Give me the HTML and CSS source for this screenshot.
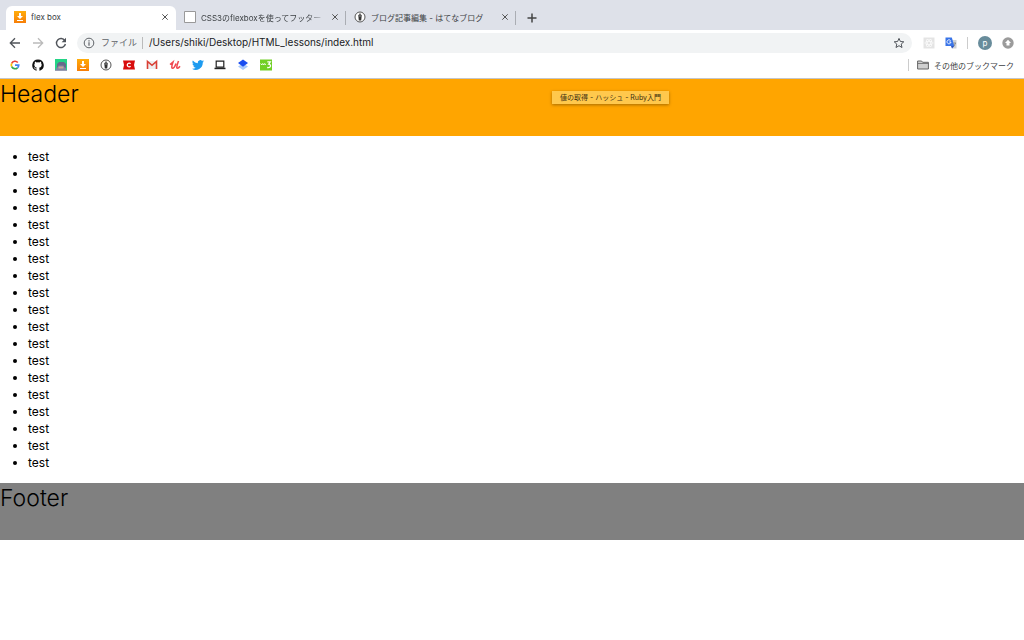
FILE: index.html
```html
<!DOCTYPE html>
<html lang="ja">
  <head>
    <meta charset="UTF-8" />
    <meta name="viewport" content="width=device-width, initial-scale=1.0" />
    <title>flex box</title>
    <link rel="stylesheet" href="styles.css" />
  </head>
  <body>
    <!-- shared icons -->
    <svg class="defs" aria-hidden="true">
      <defs>
        <linearGradient id="orange" x1="0" y1="0" x2="0" y2="1">
          <stop offset="0" stop-color="#ffad0a" />
          <stop offset="1" stop-color="#f77e08" />
        </linearGradient>
        <symbol id="download" viewBox="0 0 12 12">
          <rect width="12" height="12" fill="url(#orange)" />
          <path d="M5 2h2v3h2L6 8 3 5h2zM3 9h6v1H3z" fill="#fff" />
        </symbol>
        <symbol id="hatena" viewBox="0 0 12 12">
          <circle cx="6" cy="6" r="5" fill="#fff" stroke="#555" />
          <path d="M6 2L4.3 4.5 4.8 9.600h2.400l.5-5.100z" fill="#333" />
          <path d="M6 2v4" stroke="#ccc" stroke-width=".6" />
        </symbol>
        <symbol id="close" viewBox="0 0 8 8">
          <path d="M1.3 1.3l5.4 5.4M6.7 1.3L1.3 6.700" stroke="#555" stroke-width="1" />
        </symbol>
      </defs>
    </svg>

    <div class="browser">
      <div class="tabs">
        <div class="tab active">
          <svg class="icon"><use href="#download" /></svg>
          <span class="tab-title">flex box</span>
          <button class="close" aria-label="閉じる"><svg><use href="#close" /></svg></button>
        </div>
        <div class="tab">
          <svg class="icon" viewBox="0 0 12 12"><path d="M.5.5h11v11H.5z" fill="#fff" stroke="#999" /></svg>
          <span class="tab-title fade">CSS3のflexboxを使ってフッター</span>
          <button class="close" aria-label="閉じる"><svg><use href="#close" /></svg></button>
        </div>
        <div class="tab">
          <svg class="icon"><use href="#hatena" /></svg>
          <span class="tab-title">ブログ記事編集 - はてなブログ</span>
          <button class="close" aria-label="閉じる"><svg><use href="#close" /></svg></button>
        </div>
        <button class="new-tab" aria-label="新しいタブ">
          <svg viewBox="0 0 10 10"><path d="M5 .5v9M.5 5h9" stroke="#444" stroke-width="1.5" /></svg>
        </button>
      </div>

      <div class="toolbar">
        <div class="nav">
          <button aria-label="戻る">
            <svg class="icon" viewBox="0 0 12 12"><path d="M11 6H1.5M6 1.3L1.3 6 6 10.7" fill="none" stroke="#50545a" stroke-width="1.3" /></svg>
          </button>
          <button aria-label="進む">
            <svg class="icon" viewBox="0 0 12 12"><path d="M1 6h9.5M6 1.3L10.7 6 6 10.7" fill="none" stroke="#bbb" stroke-width="1.3" /></svg>
          </button>
          <button aria-label="再読み込み">
            <svg class="icon" viewBox="0 0 12 12"><path d="M9.8 3.6A4.5 4.5 0 1 0 10.4 7" fill="none" stroke="#50545a" stroke-width="1.4" /><path d="M11 .8v4.4H6.6z" fill="#50545a" /></svg>
          </button>
        </div>
        <div class="address">
          <svg class="icon" viewBox="0 0 12 12"><circle cx="6" cy="6" r="4.8" fill="none" stroke="#5f6368" /><path d="M6 5.2v3.5M6 3.2v1.2" stroke="#5f6368" stroke-width="1.2" /></svg>
          <label for="url">ファイル</label>
          <input type="text" id="url" value="/Users/shiki/Desktop/HTML_lessons/index.html" />
          <button aria-label="ブックマークに追加">
            <svg class="icon" viewBox="0 0 12 12"><path d="M6 1.4l1.4 3.1 3.4.3-2.6 2.3.8 3.4-3-1.8-3 1.8.8-3.4L1.2 4.8l3.4-.3z" fill="none" stroke="#50545a" /></svg>
          </button>
        </div>
        <div class="extensions">
          <button aria-label="React">
            <svg class="icon" viewBox="0 0 12 12"><path d="M.5.5h11v11H.5z" fill="#e4e4e4" /><g fill="none" stroke="#fff" stroke-width=".6"><ellipse cx="6" cy="6" rx="4.2" ry="1.7" /><ellipse cx="6" cy="6" rx="4.2" ry="1.7" transform="rotate(60 6 6)" /><ellipse cx="6" cy="6" rx="4.2" ry="1.7" transform="rotate(120 6 6)" /></g></svg>
          </button>
          <button aria-label="翻訳">
            <svg class="icon" viewBox="0 0 12 12"><path d="M5 3h6.5v8.500H7z" fill="#cfd2d6" /><path d="M.5.5h6.300l2.500 8.500H.5z" fill="#3974e8" /><path d="M6 9h3.300L7 11.500z" fill="#2a50b8" /><path d="M5.6 3.6A2 2 0 1 0 6 5H4.200" fill="none" stroke="#fff" stroke-width=".9" /><path d="M8.500 6h2.500M10.600 6L9 9" stroke="#777" stroke-width=".7" /></svg>
          </button>
          <span class="divider"></span>
          <button class="avatar" aria-label="プロフィール">p</button>
          <button aria-label="更新">
            <svg class="icon" viewBox="0 0 12 12"><circle cx="6" cy="6" r="5.700" fill="#9b9b9b" /><path d="M6 2.800L9 6 7.500 6v2.500h-3V6H3z" fill="#fff" /></svg>
          </button>
        </div>
      </div>

      <div class="bookmarks">
        <nav class="bookmark-icons">
          <a href="#" aria-label="Google">
            <svg class="icon" viewBox="0 0 12 12"><g fill="none" stroke-width="1.7"><path d="M8.8 3.5A3.7 3.7 0 0 0 2.7 4.3" stroke="#ea4335" /><path d="M2.7 4.3a3.7 3.7 0 0 0 0 3.4" stroke="#fbbc05" /><path d="M2.7 7.7a3.7 3.7 0 0 0 5.8 1.1" stroke="#34a853" /><path d="M8.5 8.8A3.7 3.7 0 0 0 9.7 6.2H6" stroke="#4285f4" /></g></svg>
          </a>
          <a href="#" aria-label="GitHub">
            <svg class="icon" viewBox="0 0 16 16"><path d="M8 .5a7.7 7.7 0 0 0-2.4 15c.4.1.5-.2.5-.4v-1.5c-2.1.5-2.600-.9-2.600-.9-.3-.9-.8-1.100-.8-1.100-.7-.5 0-.5 0-.5.8.1 1.200.8 1.200.8.7 1.200 1.800.9 2.200.7.1-.5.3-.9.5-1.100-1.700-.2-3.500-.9-3.500-3.800 0-.8.3-1.500.8-2-.1-.2-.4-1 .1-2 0 0 .6-.2 2.100.8a7.500 7.500 0 0 1 3.800 0c1.500-1 2.100-.8 2.100-.8.4 1 .2 1.800.1 2 .5.5.8 1.200.8 2 0 2.900-1.800 3.600-3.500 3.800.3.2.5.7.5 1.400v2.200c0 .2.1.5.5.4A7.700 7.700 0 0 0 8 .5z" fill="#111" /></svg>
          </a>
          <a href="#" aria-label="キャラクター">
            <svg class="icon" viewBox="0 0 12 12"><path d="M0 0h12v12H0z" fill="#24d486" /><path d="M2 9V5l2-2h5l2 2v4z" fill="#666b8a" /><path d="M1 9l2-1 .5-1.500h5L9 8l2 1v2H1z" fill="#8085a3" /><path d="M3.500 7.500h5v2h-5z" fill="#c9a698" /><path d="M0 11h12v1H0z" fill="#999db3" /></svg>
          </a>
          <a href="#" aria-label="ダウンロード"><svg class="icon"><use href="#download" /></svg></a>
          <a href="#" aria-label="はてなブログ"><svg class="icon"><use href="#hatena" /></svg></a>
          <a href="#" aria-label="チケット">
            <svg class="icon" viewBox="0 0 12 12"><path d="M0 1.500h12L11 6l1 4.500H0L1 6z" fill="#d80c0c" /><path d="M7.600 4.700a1.900 1.900 0 1 0 0 2.600" fill="none" stroke="#fff" stroke-width="1.300" /></svg>
          </a>
          <a href="#" aria-label="Gmail">
            <svg class="icon" viewBox="0 0 12 12"><path d="M1 2h10v8H1z" fill="#eee" /><path d="M1.500 10V2.500L6 6.300l4.500-3.800V10" fill="none" stroke="#d93f35" stroke-width="1.600" /></svg>
          </a>
          <a href="#" aria-label="Udemy">
            <svg class="icon" viewBox="0 0 12 12"><path d="M1 5.500L4 3C3.200 5.500 2 9.300 3.500 9.300S6.500 6 7 4.500M9.500 2C8.500 5 6.800 9.300 8.500 9.300c1 0 1.800-1 2.500-2" fill="none" stroke="#f04850" stroke-width="1.500" /></svg>
          </a>
          <a href="#" aria-label="Twitter">
            <svg class="icon" viewBox="0 0 24 24"><path d="M24 4.600a10 10 0 0 1-2.800.8 5 5 0 0 0 2.100-2.700 10 10 0 0 1-3.100 1.200 4.900 4.900 0 0 0-8.400 4.500A14 14 0 0 1 1.700 3.100a4.900 4.900 0 0 0 1.500 6.600 5 5 0 0 1-2.200-.6 4.900 4.900 0 0 0 3.900 4.900 5 5 0 0 1-2.200.1 4.900 4.900 0 0 0 4.600 3.400A10 10 0 0 1 0 19.500a14 14 0 0 0 21.500-12.400A10 10 0 0 0 24 4.600z" fill="#1d9bf0" /></svg>
          </a>
          <a href="#" aria-label="パソコン">
            <svg class="icon" viewBox="0 0 12 12"><path d="M2.200 2.200h7.600v6H2.200z" fill="none" stroke="#222" stroke-width="1.200" /><path d="M.5 8.700h11v1.500H.5z" fill="#222" /></svg>
          </a>
          <a href="#" aria-label="レイヤー">
            <svg class="icon" viewBox="0 0 12 12"><path d="M1 7.500L6 4.500l5 3-5 3.500z" fill="#a9c9fa" /><path d="M1 4l5-3.500L11 4 6 7.800z" fill="#1a4df0" /></svg>
          </a>
          <a href="#" aria-label="w3">
            <svg class="icon" viewBox="0 0 12 12"><path d="M0 .5h12v11H0z" fill="#71cf26" /><path d="M.7 4.500l1 1.500 1-1.500 1 1.500 1-1.500 1 1.500" fill="none" stroke="#fff" stroke-width=".9" /><path d="M7.300 2.800h3L8.700 5.200c2.800 0 2.500 4-1.500 3.300" fill="none" stroke="#fff" stroke-width="1.300" /></svg>
          </a>
        </nav>
        <button class="other-bookmarks">
          <svg class="icon" viewBox="0 0 12 12"><path d="M.6 2h4l1 1.300h5.800V10H.6z" fill="#d0d0d0" stroke="#666" /><path d="M.6 4.500h10.800" stroke="#666" stroke-width=".8" /></svg>
          その他のブックマーク
        </button>
      </div>
    </div>

    <div class="page">
      <div class="tooltip">値の取得 - ハッシュ - Ruby入門</div>
      <header>Header</header>
      <ul>
        <li>test</li>
        <li>test</li>
        <li>test</li>
        <li>test</li>
        <li>test</li>
        <li>test</li>
        <li>test</li>
        <li>test</li>
        <li>test</li>
        <li>test</li>
        <li>test</li>
        <li>test</li>
        <li>test</li>
        <li>test</li>
        <li>test</li>
        <li>test</li>
        <li>test</li>
        <li>test</li>
        <li>test</li>
      </ul>
      <footer>Footer</footer>
    </div>
  </body>
</html>
```
FILE: styles.css
```css
* {
  box-sizing: border-box;
}
body {
  margin: 0;
  background: #fff;
  color: #000;
  font-family: Inter, "Noto Sans CJK JP", sans-serif;
}
button {
  display: flex;
  align-items: center;
  padding: 0;
  border: 0;
  background: none;
  font: inherit;
  color: inherit;
}
.defs {
  position: absolute;
  width: 0;
  height: 0;
}
.icon {
  display: block;
  flex: none;
  width: 12px;
  height: 12px;
}

/* ブラウザ */
.browser {
  border-bottom: 1px solid #c4c5c8;
  font-size: 8px;
  color: #3c4043;
}

/* タブ */
.tabs {
  display: flex;
  height: 30px;
  padding: 6px 6px 0;
  background: #dee1e9;
}
.tab {
  display: flex;
  align-items: center;
  gap: 5px;
  width: 170px;
  padding: 0 7px 2px 8px;
  background: linear-gradient(#aaadb3, #aaadb3) right center / 1px 14px no-repeat;
}
.tab.active {
  background: #fff;
  border-radius: 6px 6px 0 0;
}
.tab-title {
  flex: 1;
  overflow: hidden;
  white-space: nowrap;
}
.tab-title.fade {
  mask-image: linear-gradient(to right, #000 85%, transparent);
}
.close svg {
  width: 8px;
  height: 8px;
}
.new-tab {
  margin-left: 11px;
}
.new-tab svg {
  width: 10px;
  height: 10px;
}

/* ツールバー */
.toolbar {
  display: flex;
  align-items: center;
  height: 25px;
  padding: 0 10px 0 9px;
}
.nav {
  display: flex;
  gap: 11px;
  margin-right: 10px;
}
.address {
  display: flex;
  flex: 1;
  align-items: center;
  height: 20px;
  padding: 0 7px 0 6px;
  border-radius: 10px;
  background: #f1f3f4;
}
.address label {
  margin-left: 6px;
  padding-right: 5px;
  border-right: 1px solid #bbb;
  font-size: 9px;
  line-height: 12px;
  color: #5f6368;
}
.address input {
  flex: 1;
  min-width: 0;
  padding: 0 6px 1px;
  border: 0;
  background: none;
  font: inherit;
  font-size: 10px;
  color: #202124;
}
.extensions {
  display: flex;
  align-items: center;
  gap: 10px;
  margin-left: 11px;
}
.divider {
  width: 1px;
  height: 12px;
  background: #ccc;
}
.avatar {
  justify-content: center;
  width: 14px;
  height: 14px;
  border-radius: 50%;
  background: #688c9b;
  color: #fff;
}

/* ブックマーク */
.bookmarks {
  display: flex;
  align-items: center;
  justify-content: space-between;
  height: 23px;
  padding: 0 10px 3px 9px;
}
.bookmark-icons {
  display: flex;
  justify-content: space-between;
  width: 263px;
}
.other-bookmarks {
  gap: 5px;
  padding-left: 8px;
  border-left: 1px solid #ccc;
}

/* ページ */
.page {
  position: relative;
}
header,
footer {
  height: 57px;
  font-size: 23px;
  font-weight: 300;
  line-height: 30px;
}
header {
  background: orange;
}
footer {
  background: gray;
}
ul {
  margin: 12px 0;
  padding-left: 28px;
  font-size: 12px;
  line-height: 17px;
}
.tooltip {
  position: absolute;
  top: 12px;
  left: 552px;
  padding: 0 8px;
  background: #ffc84d;
  box-shadow: 0 1px 3px rgba(0, 0, 0, 0.35);
  color: #3a2d10;
  font-size: 7px;
  line-height: 13px;
}
```
